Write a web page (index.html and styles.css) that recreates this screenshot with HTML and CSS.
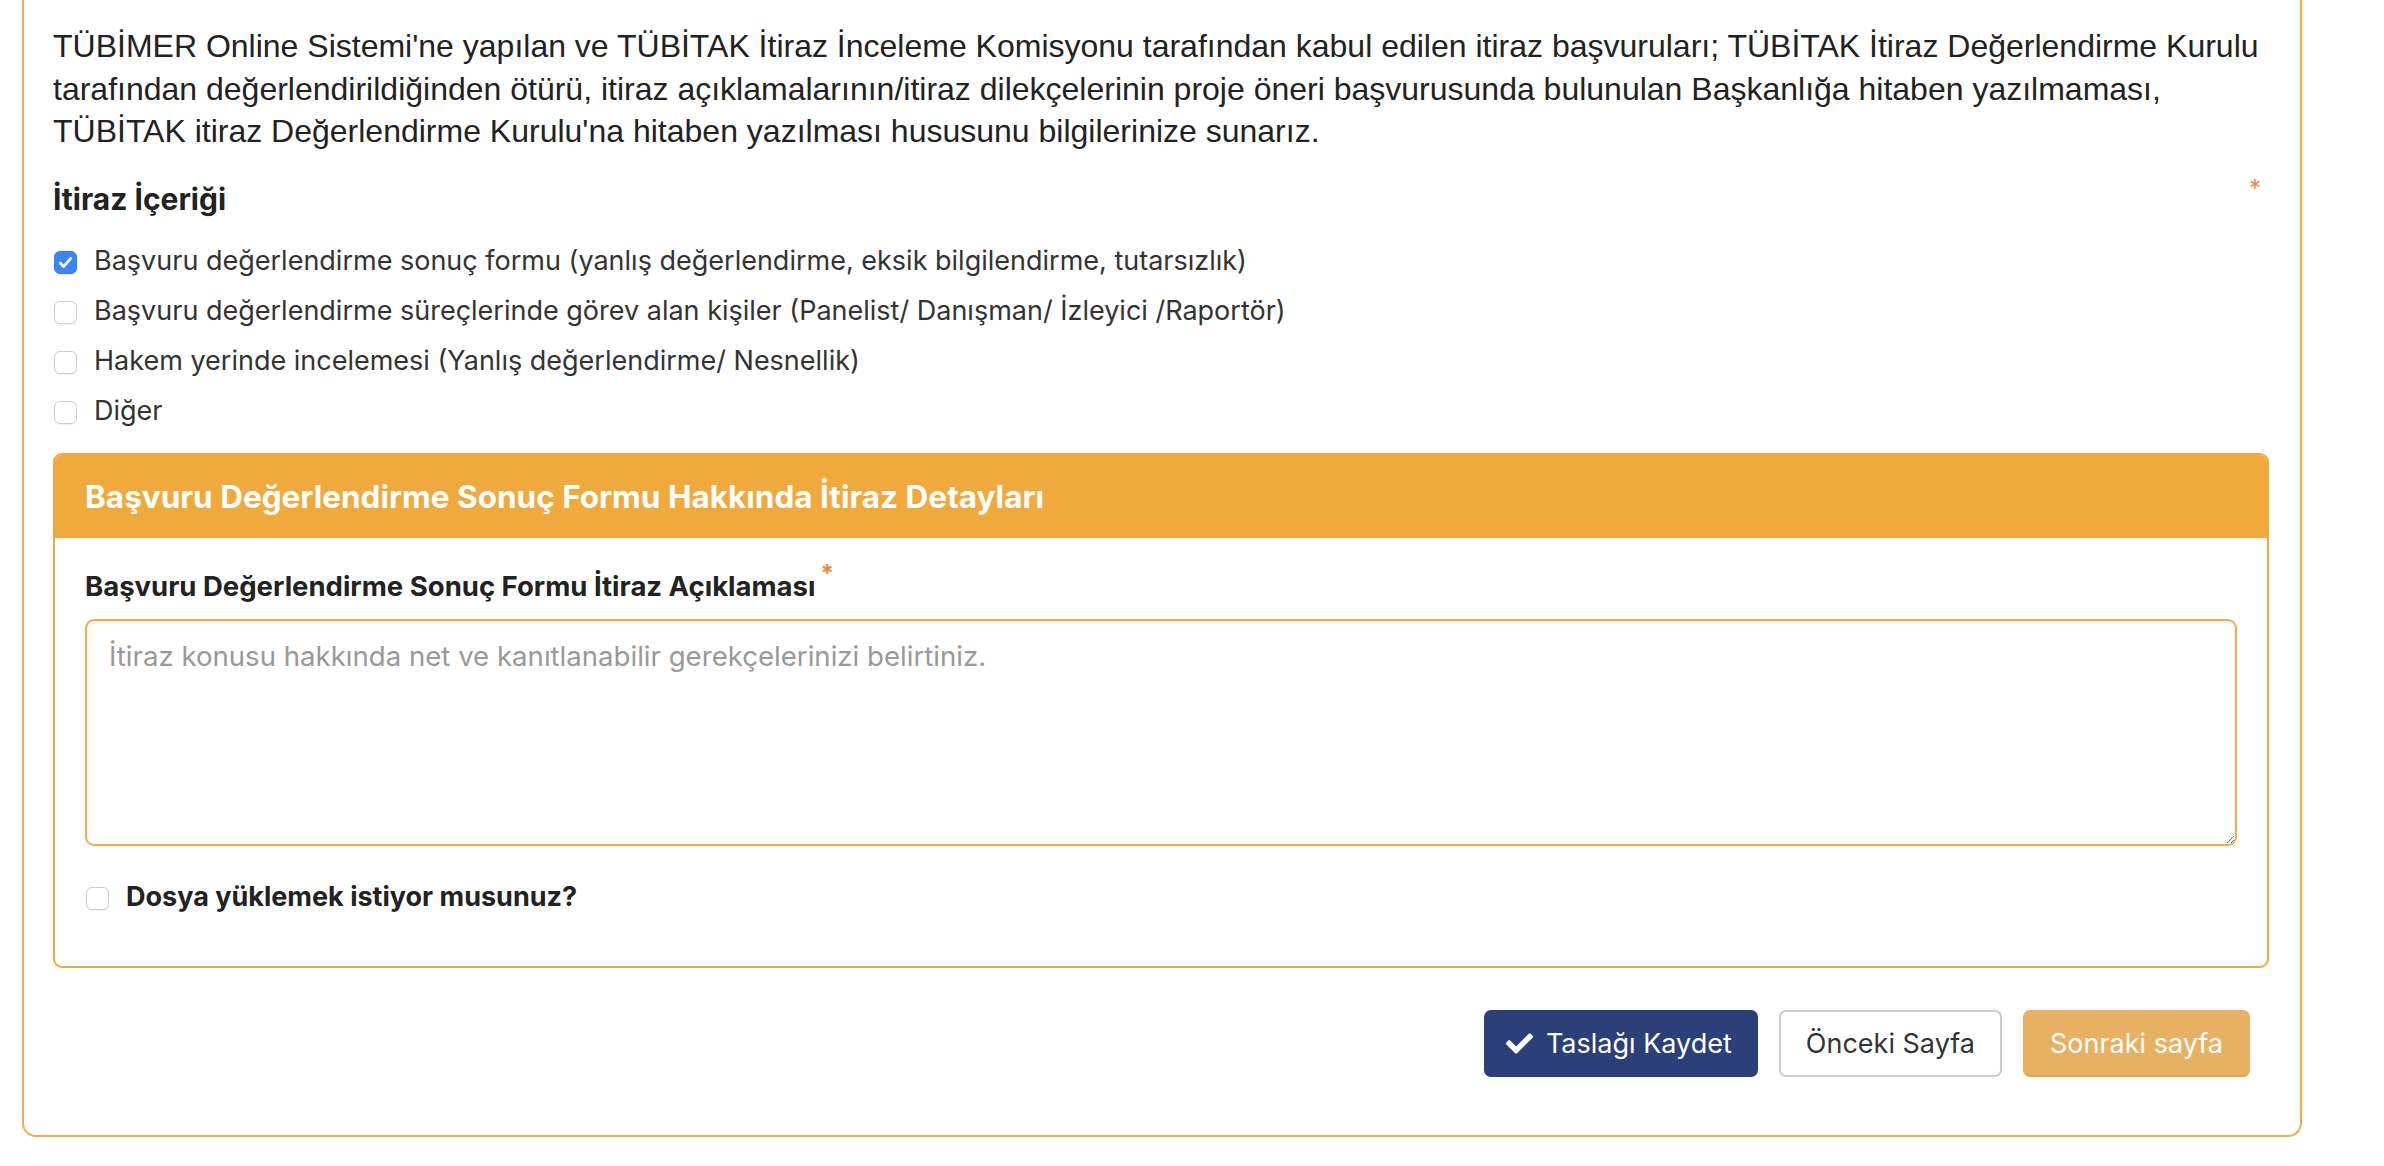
FILE: index.html
```html
<!DOCTYPE html>
<html lang="tr">
<head>
<meta charset="utf-8">
<title>İtiraz Başvurusu</title>
<link rel="stylesheet" href="styles.css">
</head>
<body>
<main class="card">
  <p class="notice">TÜBİMER Online Sistemi'ne yapılan ve TÜBİTAK İtiraz İnceleme Komisyonu tarafından kabul edilen itiraz başvuruları; TÜBİTAK İtiraz Değerlendirme Kurulu tarafından değerlendirildiğinden ötürü, itiraz açıklamalarının/itiraz dilekçelerinin proje öneri başvurusunda bulunulan Başkanlığa hitaben yazılmaması, TÜBİTAK itiraz Değerlendirme Kurulu'na hitaben yazılması hususunu bilgilerinize sunarız.</p>

  <div class="field-head">
    <h3 class="field-title">İtiraz İçeriği</h3>
    <span class="req">*</span>
  </div>

  <ul class="check-list">
    <li><label class="check"><input type="checkbox" checked><span>Başvuru değerlendirme sonuç formu (yanlış değerlendirme, eksik bilgilendirme, tutarsızlık)</span></label></li>
    <li><label class="check"><input type="checkbox"><span>Başvuru değerlendirme süreçlerinde görev alan kişiler (Panelist/ Danışman/ İzleyici /Raportör)</span></label></li>
    <li><label class="check"><input type="checkbox"><span>Hakem yerinde incelemesi (Yanlış değerlendirme/ Nesnellik)</span></label></li>
    <li><label class="check"><input type="checkbox"><span>Diğer</span></label></li>
  </ul>

  <section class="panel">
    <header class="panel-head">Başvuru Değerlendirme Sonuç Formu Hakkında İtiraz Detayları</header>
    <div class="panel-body">
      <label class="input-label" for="aciklama">Başvuru Değerlendirme Sonuç Formu İtiraz Açıklaması<sup class="req-inline">*</sup></label>
      <textarea id="aciklama" class="text-input" placeholder="İtiraz konusu hakkında net ve kanıtlanabilir gerekçelerinizi belirtiniz."></textarea>
      <label class="check check-strong"><input type="checkbox"><span>Dosya yüklemek istiyor musunuz?</span></label>
    </div>
  </section>

  <div class="actions">
    <button type="button" class="btn btn-primary">
      <svg class="btn-icon" viewBox="0 0 512 512" aria-hidden="true"><path d="M173.9 439.4l-166.4-166.4c-10-10-10-26.2 0-36.2l36.2-36.2c10-10 26.2-10 36.2 0L192 312.7 432.1 72.6c10-10 26.2-10 36.2 0l36.2 36.2c10 10 10 26.2 0 36.2l-294.4 294.4c-10 10-26.2 10-36.2 0z"/></svg>
      Taslağı Kaydet
    </button>
    <button type="button" class="btn btn-default">Önceki Sayfa</button>
    <button type="button" class="btn btn-next">Sonraki sayfa</button>
  </div>
</main>
</body>
</html>
```

FILE: styles.css
```css
* {
  box-sizing: border-box;
}

body {
  margin: 0;
  background: #fff;
  font-family: Inter, "Noto Sans", sans-serif;
  color: #333;
}

.card {
  margin: -30px 0 0 22px;
  width: 2280px;
  border: 2px solid #f0ad4e;
  border-radius: 0 0 14px 14px;
  padding: 53px 31px 58px 29px;
}

.notice {
  margin: 0;
  font-family: "Liberation Sans", Arial, sans-serif;
  font-size: 32px;
  line-height: 42.6px;
  color: #222;
}

.field-head {
  display: flex;
  justify-content: space-between;
  margin-top: 28px;
  padding-right: 8px;
}

.field-title {
  margin: 0;
  font-size: 30px;
  line-height: 36px;
  font-weight: 700;
  color: #222;
}

.req {
  color: #ea8a3a;
  font-size: 24px;
  line-height: 20px;
  margin-top: -2px;
}

.check-list {
  list-style: none;
  margin: 19px 0 0;
  padding: 0;
}

.check-list li {
  height: 50px;
  display: flex;
  align-items: center;
}

.check {
  display: flex;
  align-items: center;
  gap: 17px;
  font-size: 27px;
  line-height: 36px;
  color: #333;
  cursor: pointer;
}

/* macOS-like checkbox */
.check input {
  appearance: none;
  -webkit-appearance: none;
  margin: 4px 0 0 1px;
  width: 23px;
  height: 23px;
  flex: none;
  border: 1.5px solid #cfcfcf;
  border-radius: 6px;
  background: #fff;
  box-shadow: 0 1px 1px rgba(0, 0, 0, 0.06);
}

.check input:checked {
  border-color: #2f7cf6;
  background: #3a86f8 url("data:image/svg+xml,%3Csvg xmlns='http://www.w3.org/2000/svg' viewBox='0 0 20 20'%3E%3Cpath d='M5 10.5l3.2 3.5L15 6' fill='none' stroke='white' stroke-width='2.6' stroke-linecap='round' stroke-linejoin='round'/%3E%3C/svg%3E") center / 100% no-repeat;
}

/* detail panel */
.panel {
  margin-top: 17px;
  border: 2px solid #f0a93c;
  border-radius: 9px;
  overflow: hidden;
}

.panel-head {
  height: 83px;
  display: flex;
  align-items: center;
  padding: 0 30px;
  background: #f0a93c;
  color: #fff;
  font-size: 31.5px;
  font-weight: 700;
}

.panel-body {
  padding: 30px 30px 51px;
}

.input-label {
  display: block;
  font-size: 27.5px;
  font-weight: 700;
  line-height: 36px;
  color: #222;
}

.req-inline {
  color: #ea8a3a;
  font-size: 24px;
  margin-left: 5px;
  vertical-align: 14px;
  line-height: 0;
}

.text-input {
  display: block;
  width: 100%;
  height: 227px;
  margin-top: 15px;
  padding: 18px 22px;
  border: 2px solid #f0ad4e;
  border-radius: 9px;
  box-shadow: inset 0 2px 3px rgba(0, 0, 0, 0.08);
  font-family: Inter, "Noto Sans", sans-serif;
  font-size: 27.6px;
  color: #333;
  resize: vertical;
  outline: none;
}

.text-input::placeholder {
  color: #999;
}

.check-strong {
  margin-top: 33px;
  font-weight: 700;
  color: #222;
}

/* footer buttons */
.actions {
  display: flex;
  justify-content: flex-end;
  gap: 21px;
  margin-top: 42px;
  padding-right: 19px;
}

.btn {
  display: inline-flex;
  align-items: center;
  gap: 13px;
  height: 67px;
  padding: 0 25px;
  border: 2px solid transparent;
  border-radius: 7px;
  font-family: Inter, "Noto Sans", sans-serif;
  font-size: 27px;
  cursor: pointer;
}

.btn-icon {
  width: 27px;
  height: 27px;
  fill: currentColor;
}

.btn-primary {
  padding: 0 24px 0 20px;
  background: #2b3f78;
  border-color: #2b3f78;
  color: #fff;
}

.btn-default {
  background: #fff;
  border-color: #cccccc;
  color: #333;
}

.btn-next {
  background: #e8b062;
  border-color: #e8b062;
  border-bottom-color: #e3a650;
  color: #fff;
}
```
